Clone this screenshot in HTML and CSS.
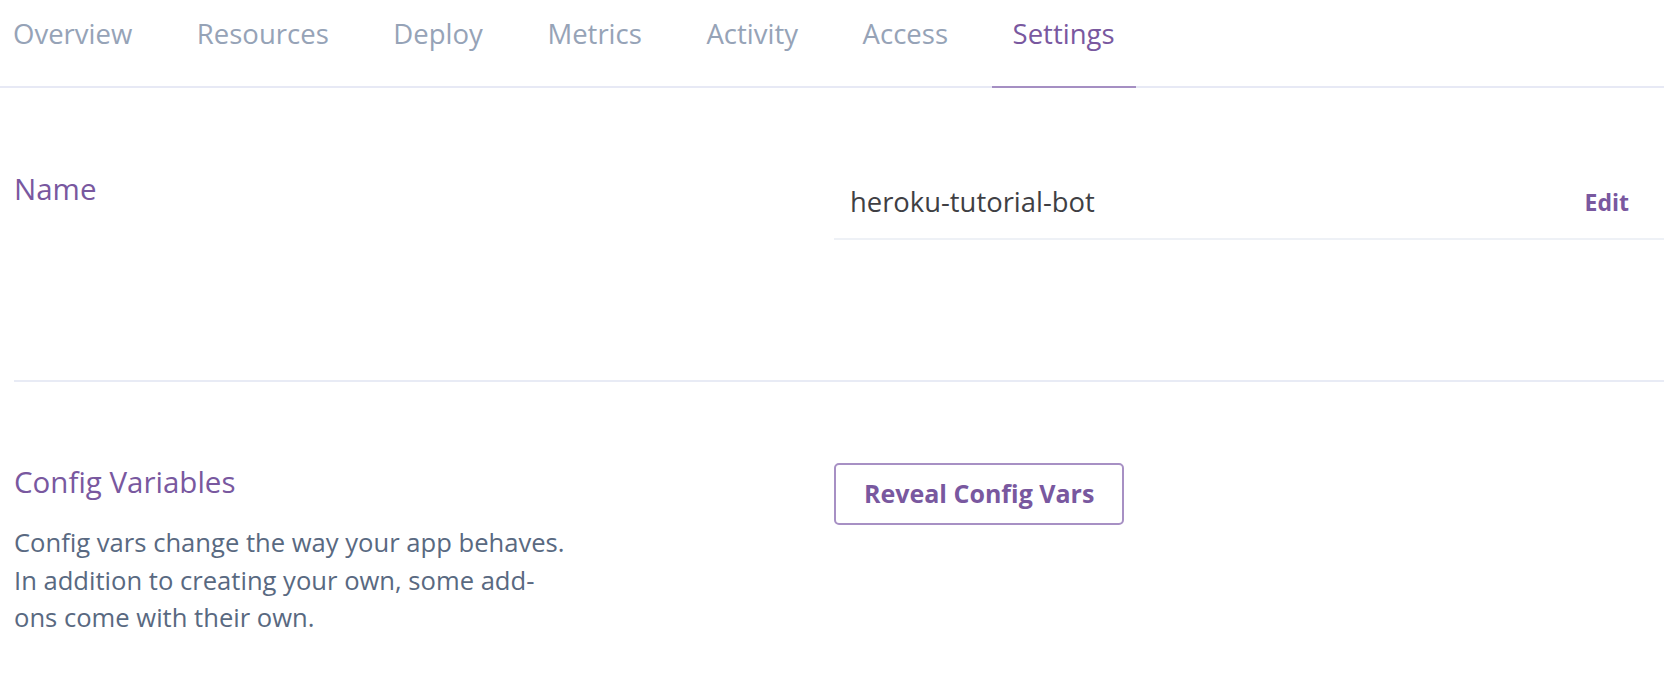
FILE: index.html
```html
<!DOCTYPE html>
<html lang="en">
<head>
<meta charset="utf-8">
<title>Settings</title>
<link rel="stylesheet" href="styles.css">
</head>
<body>
<nav class="tabs">
  <a class="tab">Overview</a>
  <a class="tab">Resources</a>
  <a class="tab">Deploy</a>
  <a class="tab">Metrics</a>
  <a class="tab">Activity</a>
  <a class="tab">Access</a>
  <a class="tab tab-active">Settings</a>
</nav>
<main class="content">
  <section class="row row-name">
    <div class="label-col">
      <h2 class="heading">Name</h2>
    </div>
    <div class="value-col">
      <div class="field">
        <span class="field-value">heroku-tutorial-bot</span>
        <a class="field-edit">Edit</a>
      </div>
    </div>
  </section>
  <div class="divider"></div>
  <section class="row row-config">
    <div class="label-col">
      <h2 class="heading">Config Variables</h2>
      <p class="desc">Config vars change the way your app behaves. In addition to creating your own, some add-ons come with their own.</p>
    </div>
    <div class="value-col">
      <button class="btn">Reveal Config Vars</button>
    </div>
  </section>
</main>
</body>
</html>
```
FILE: styles.css
```css
* { box-sizing: border-box; }
html, body { margin: 0; padding: 0; background: #ffffff; }
body {
  font-family: "Open Sans", "Noto Sans", sans-serif;
  color: #3f3f44;
  width: 1664px;
  overflow: hidden;
}

.tabs {
  display: flex;
  gap: 22.6px;
  border-bottom: 2px solid #e7e9f5;
}
.tab {
  font-size: 27.5px;
  line-height: 40px;
  color: #96a3b7;
  padding: 14px 21px 32px;
  border-bottom: 2px solid transparent;
  margin-bottom: -2px;
  white-space: nowrap;
}
.tab:first-child { padding-left: 13px; }
.tab-active {
  color: #79589f;
  border-bottom-color: #a58fc3;
}

.content { padding-left: 14px; }

.row {
  display: grid;
  grid-template-columns: 820px 1fr;
}
.row-name { padding: 81px 0 140px; }
.row-config { padding: 80px 0 40px; }

.heading {
  margin: 0;
  font-size: 29.5px;
  line-height: 40px;
  font-weight: 400;
  color: #79589f;
}

.field {
  display: flex;
  align-items: center;
  justify-content: space-between;
  padding: 13px 35px 16px 16px;
  border-bottom: 2px solid #eef1f6;
}
.field-value {
  font-size: 27.4px;
  line-height: 40px;
  color: #3f3f44;
}
.field-edit {
  font-size: 23px;
  line-height: 40px;
  font-weight: 700;
  color: #79589f;
}

.divider {
  height: 2px;
  background: #e8ebf5;
}

.desc {
  margin: 22px 0 0;
  max-width: 556px;
  font-size: 25.6px;
  line-height: 37.5px;
  color: #596981;
}

.btn {
  margin-top: 1px;
  font-family: "Open Sans", "Noto Sans", sans-serif;
  font-size: 25px;
  line-height: 42px;
  font-weight: 700;
  color: #79589f;
  background: #ffffff;
  border: 2px solid #a790c4;
  border-radius: 5px;
  padding: 7px 28px 9px;
  cursor: pointer;
}
```
